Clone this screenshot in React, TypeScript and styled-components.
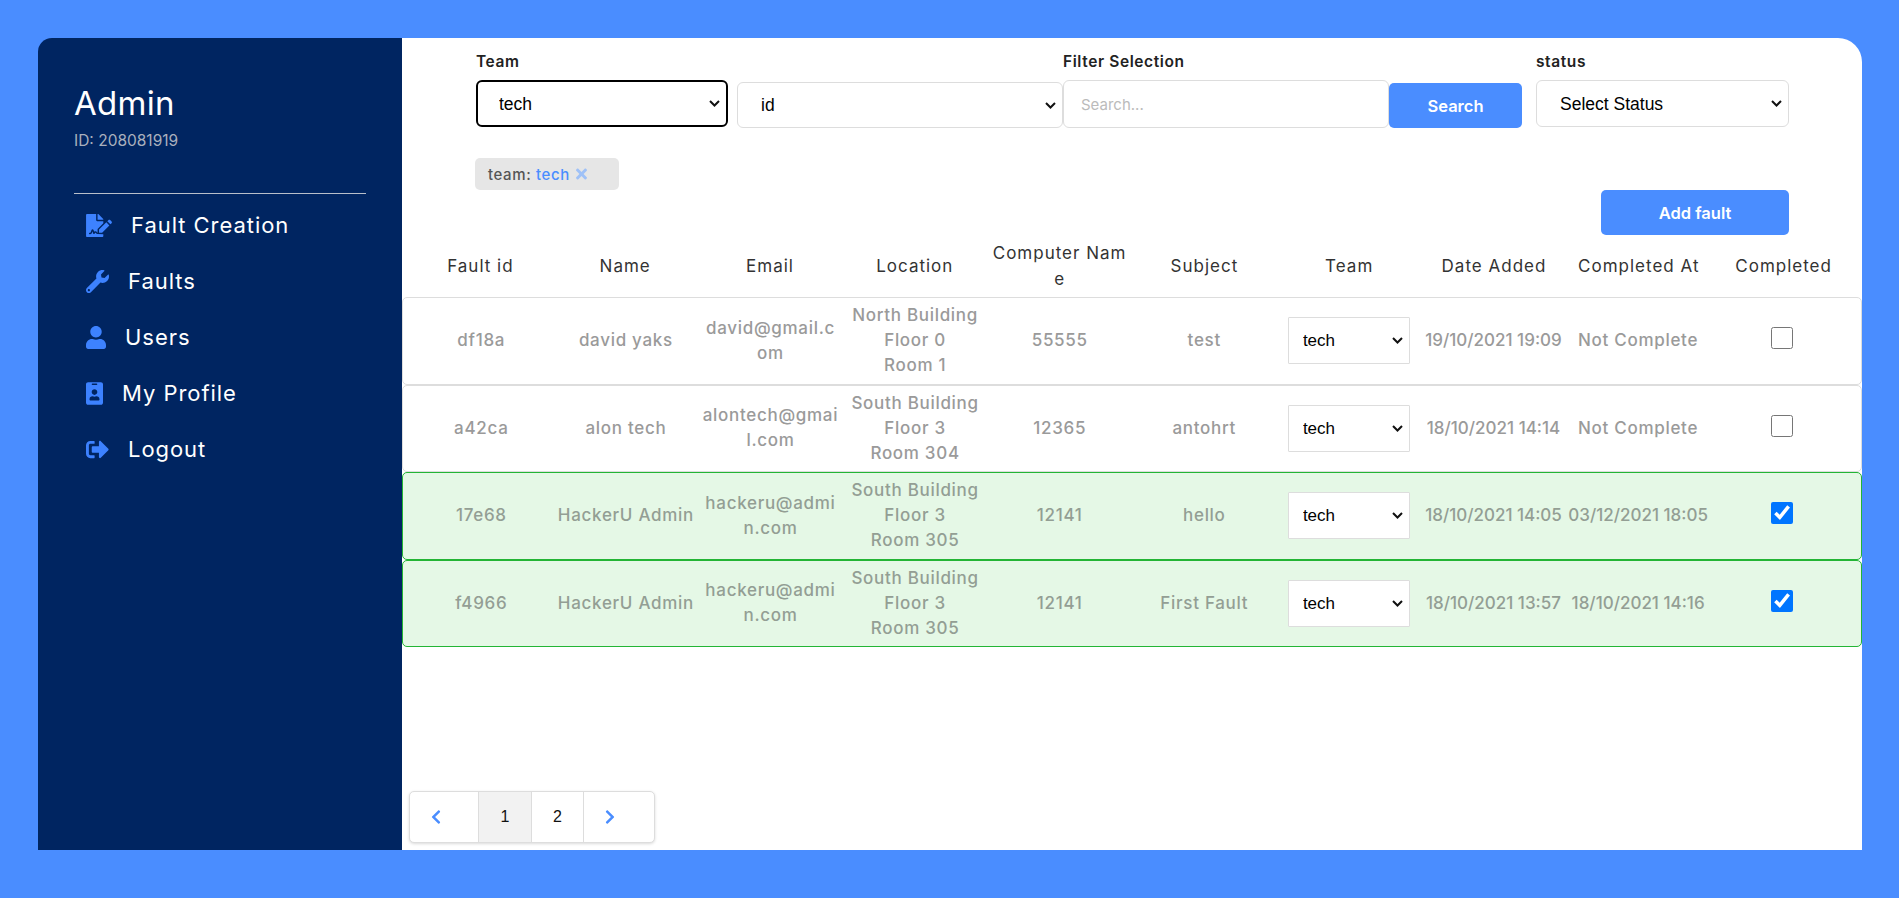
import React from "react";
import styled, { createGlobalStyle, css } from "styled-components";
import {
  FaChevronLeft,
  FaChevronRight,
  FaFileSignature,
  FaIdBadge,
  FaSignOutAlt,
  FaTimes,
  FaUser,
  FaWrench,
} from "react-icons/fa";

const GlobalStyle = createGlobalStyle`
  html, body {
    margin: 0;
    height: 100%;
    background: #4a8dff;
  }
  body {
    font-family: Inter, "Noto Sans", sans-serif;
  }
  * {
    box-sizing: border-box;
  }
`;

const selectArrow = `url("data:image/svg+xml,%3Csvg xmlns='http://www.w3.org/2000/svg' width='11' height='7' viewBox='0 0 11 7'%3E%3Cpath d='M1 1l4.5 4.5L10 1' fill='none' stroke='%23111' stroke-width='2'/%3E%3C/svg%3E")`;

const selectBase = css`
  appearance: none;
  font-family: "Liberation Sans", Arial, sans-serif;
  color: #000;
  background: #fff ${selectArrow} no-repeat right 6px center;
  outline: none;
`;

const Page = styled.div`
  height: 898px;
  padding: 38px 37px 48px 38px;
  background: #4a8dff;
`;

const Shell = styled.div`
  display: flex;
  height: 100%;
`;

const Sidebar = styled.aside`
  width: 364px;
  flex-shrink: 0;
  padding: 44px 36px 0;
  background: #002561;
  border-top-left-radius: 14px;
  color: #fff;
`;

const AdminName = styled.div`
  font-size: 33px;
  line-height: 42px;
  letter-spacing: 0.3px;
`;

const AdminId = styled.div`
  margin-top: 5px;
  font-size: 15.5px;
  line-height: 24px;
  color: #a9b0bd;
`;

const Divider = styled.hr`
  margin: 40px 0 3px;
  border: 0;
  border-top: 1px solid #b9bfca;
`;

const NavList = styled.nav`
  display: flex;
  flex-direction: column;
`;

const NavItem = styled.a<{ $iconWidth: number }>`
  display: flex;
  align-items: center;
  gap: 19px;
  height: 56px;
  padding-left: 12px;
  font-size: 22px;
  letter-spacing: 0.95px;
  color: #fff;

  svg {
    width: ${(props) => props.$iconWidth}px;
    height: 23px;
    color: #3d82ff;
  }
`;

const Main = styled.main`
  flex: 1;
  display: flex;
  flex-direction: column;
  min-width: 0;
  background: #fff;
  border-top-right-radius: 24px;
`;

const FilterBar = styled.div`
  display: flex;
  align-items: flex-end;
  padding: 12px 73px 0 74px;
`;

const FilterField = styled.div<{ $width: number; $gap?: number }>`
  display: flex;
  flex-direction: column;
  width: ${(props) => props.$width}px;
  margin-right: ${(props) => props.$gap || 0}px;
  flex-shrink: 0;
`;

const FilterLabel = styled.label`
  height: 30px;
  font-size: 15.5px;
  font-weight: 600;
  line-height: 24px;
  letter-spacing: 0.6px;
  color: #222;
  white-space: nowrap;
`;

const Select = styled.select<{ $focused?: boolean; $lower?: boolean }>`
  ${selectBase}
  height: ${(props) => (props.$lower ? 46 : 47)}px;
  margin-bottom: ${(props) => (props.$lower ? 0 : 1)}px;
  padding: 0 20px 0 ${(props) => (props.$focused ? 21 : 23)}px;
  font-size: 17.5px;
  border: ${(props) => (props.$focused ? "2px solid #000" : "1px solid #ddd")};
  border-radius: 6px;
`;

const SearchInput = styled.input`
  width: 100%;
  height: 48px;
  padding: 0 17px;
  font-family: Inter, sans-serif;
  font-size: 15px;
  background: #fff;
  border: 1px solid #ddd;
  border-radius: 6px;
  outline: none;

  &::placeholder {
    color: #bbb;
  }
`;

const PrimaryButton = styled.button`
  height: 45px;
  font-family: Inter, sans-serif;
  font-size: 16.5px;
  font-weight: 600;
  color: #fff;
  background: #4a8dff;
  border: 0;
  border-radius: 5px;
`;

const SearchButton = styled(PrimaryButton)`
  width: 133px;
`;

const ChipRow = styled.div`
  display: flex;
  padding: 30px 0 0 73px;
`;

const Chip = styled.div`
  display: flex;
  align-items: center;
  gap: 6px;
  width: 144px;
  height: 32px;
  padding-left: 13px;
  font-size: 15px;
  font-weight: 500;
  letter-spacing: 0.6px;
  color: #555;
  background: #e6e6e6;
  border-radius: 5px;

  b {
    font-weight: 500;
    color: #4a8dff;
  }

  svg {
    width: 11px;
    height: 16px;
    color: #9fc1f7;
  }
`;

const ActionRow = styled.div`
  display: flex;
  justify-content: flex-end;
  padding-right: 73px;
`;

const AddButton = styled(PrimaryButton)`
  width: 188px;
`;

const TableGrid = styled.div`
  display: grid;
  grid-template-columns: repeat(10, minmax(0, 1fr));
  align-items: center;
  padding: 0 6px;
  text-align: center;
  white-space: nowrap;
`;

const HeaderRow = styled(TableGrid)`
  height: 62px;
  font-size: 17px;
  line-height: 26px;
  letter-spacing: 1px;
  color: #333;
`;

const Row = styled(TableGrid)<{ $done: boolean }>`
  height: 87.5px;
  font-size: 17px;
  font-weight: 500;
  line-height: 25px;
  letter-spacing: 0.7px;
  color: ${(props) => (props.$done ? "#939e94" : "#9a9a9a")};
  background: ${(props) => (props.$done ? "#e5f8e6" : "#fff")};
  border: 1px solid ${(props) => (props.$done ? "#23b535" : "#ddd")};
  border-radius: 5px;
`;

const Cell = styled.div`
  display: flex;
  flex-direction: column;
  align-items: center;
  justify-content: center;
  min-width: 0;
`;

// dates have many digits, which run wider here than in the rest of the row
const DateCell = styled(Cell)<{ $date: boolean }>`
  letter-spacing: ${(props) => (props.$date ? "0" : "inherit")};
`;

const RowSelect = styled.select`
  ${selectBase}
  width: 122px;
  height: 47px;
  padding: 0 20px 0 14px;
  font-size: 17px;
  border: 1px solid #ddd;
  border-radius: 1px;
`;

const DoneCheck = styled.input`
  width: 22px;
  height: 22px;
  margin: 0 2px 5px 0;
`;

const Pagination = styled.div`
  display: flex;
  align-self: flex-start;
  height: 52px;
  margin: auto 0 7px 7px;
  background: #fff;
  border: 1px solid #ddd;
  border-radius: 5px;
  box-shadow: 0 1px 3px rgba(0, 0, 0, 0.15);
`;

const PageCell = styled.div<{ $width: number; $active?: boolean; $last?: boolean; $arrow?: boolean }>`
  display: flex;
  align-items: center;
  justify-content: ${(props) => (props.$arrow ? "flex-start" : "center")};
  width: ${(props) => props.$width}px;
  padding-left: ${(props) => (props.$arrow ? 18 : 0)}px;
  font-family: "Liberation Sans", Arial, sans-serif;
  font-size: 16px;
  color: #111;
  background: ${(props) => (props.$active ? "#f2f2f2" : "transparent")};
  border-right: ${(props) => (props.$last ? "0" : "1px solid #ddd")};

  svg {
    width: 16px;
    height: 16px;
    color: #4a8dff;
  }
`;

interface Fault {
  id: string;
  name: string;
  email: string[];
  location: string[];
  computer: string;
  subject: string;
  added: string;
  completedAt: string;
  done: boolean;
}

const faults: Fault[] = [
  {
    id: "df18a",
    name: "david yaks",
    email: ["david@gmail.c", "om"],
    location: ["North Building", "Floor 0", "Room 1"],
    computer: "55555",
    subject: "test",
    added: "19/10/2021 19:09",
    completedAt: "Not Complete",
    done: false,
  },
  {
    id: "a42ca",
    name: "alon tech",
    email: ["alontech@gmai", "l.com"],
    location: ["South Building", "Floor 3", "Room 304"],
    computer: "12365",
    subject: "antohrt",
    added: "18/10/2021 14:14",
    completedAt: "Not Complete",
    done: false,
  },
  {
    id: "17e68",
    name: "HackerU Admin",
    email: ["hackeru@admi", "n.com"],
    location: ["South Building", "Floor 3", "Room 305"],
    computer: "12141",
    subject: "hello",
    added: "18/10/2021 14:05",
    completedAt: "03/12/2021 18:05",
    done: true,
  },
  {
    id: "f4966",
    name: "HackerU Admin",
    email: ["hackeru@admi", "n.com"],
    location: ["South Building", "Floor 3", "Room 305"],
    computer: "12141",
    subject: "First Fault",
    added: "18/10/2021 13:57",
    completedAt: "18/10/2021 14:16",
    done: true,
  },
];

const navItems = [
  { label: "Fault Creation", icon: <FaFileSignature />, iconWidth: 26 },
  { label: "Faults", icon: <FaWrench />, iconWidth: 23 },
  { label: "Users", icon: <FaUser />, iconWidth: 20 },
  { label: "My Profile", icon: <FaIdBadge />, iconWidth: 17 },
  { label: "Logout", icon: <FaSignOutAlt />, iconWidth: 23 },
];

const App: React.FC = () => {
  return (
    <Page>
      <GlobalStyle />
      <Shell>
        <Sidebar>
          <AdminName>Admin</AdminName>
          <AdminId>ID: 208081919</AdminId>
          <Divider />
          <NavList>
            {navItems.map((item) => (
              <NavItem key={item.label} $iconWidth={item.iconWidth}>
                {item.icon}
                {item.label}
              </NavItem>
            ))}
          </NavList>
        </Sidebar>

        <Main>
          <FilterBar>
            <FilterField $width={252} $gap={9}>
              <FilterLabel>Team</FilterLabel>
              <Select $focused defaultValue="tech">
                <option>tech</option>
              </Select>
            </FilterField>
            <FilterField $width={326}>
              <Select $lower defaultValue="id">
                <option>id</option>
              </Select>
            </FilterField>
            <FilterField $width={326}>
              <FilterLabel>Filter Selection</FilterLabel>
              <SearchInput placeholder="Search..." />
            </FilterField>
            <FilterField $width={133} $gap={14}>
              <SearchButton>Search</SearchButton>
            </FilterField>
            <FilterField $width={253}>
              <FilterLabel>status</FilterLabel>
              <Select defaultValue="Select Status">
                <option>Select Status</option>
              </Select>
            </FilterField>
          </FilterBar>

          <ChipRow>
            <Chip>
              <span>
                team: <b>tech</b>
              </span>
              <FaTimes />
            </Chip>
          </ChipRow>

          <ActionRow>
            <AddButton>Add fault</AddButton>
          </ActionRow>

          <HeaderRow>
            <Cell>Fault id</Cell>
            <Cell>Name</Cell>
            <Cell>Email</Cell>
            <Cell>Location</Cell>
            <Cell>
              <span>Computer Nam</span>
              <span>e</span>
            </Cell>
            <Cell>Subject</Cell>
            <Cell>Team</Cell>
            <Cell>Date Added</Cell>
            <Cell>Completed At</Cell>
            <Cell>Completed</Cell>
          </HeaderRow>

          {faults.map((fault) => (
            <Row key={fault.id} $done={fault.done}>
              <Cell>{fault.id}</Cell>
              <Cell>{fault.name}</Cell>
              <Cell>
                {fault.email.map((line) => (
                  <span key={line}>{line}</span>
                ))}
              </Cell>
              <Cell>
                {fault.location.map((line) => (
                  <span key={line}>{line}</span>
                ))}
              </Cell>
              <Cell>{fault.computer}</Cell>
              <Cell>{fault.subject}</Cell>
              <Cell>
                <RowSelect defaultValue="tech">
                  <option>tech</option>
                </RowSelect>
              </Cell>
              <DateCell $date>{fault.added}</DateCell>
              <DateCell $date={fault.done}>{fault.completedAt}</DateCell>
              <Cell>
                <DoneCheck type="checkbox" defaultChecked={fault.done} />
              </Cell>
            </Row>
          ))}

          <Pagination>
            <PageCell $width={69} $arrow>
              <FaChevronLeft />
            </PageCell>
            <PageCell $width={53} $active>
              1
            </PageCell>
            <PageCell $width={52}>2</PageCell>
            <PageCell $width={70} $arrow $last>
              <FaChevronRight />
            </PageCell>
          </Pagination>
        </Main>
      </Shell>
    </Page>
  );
};

export default App;
